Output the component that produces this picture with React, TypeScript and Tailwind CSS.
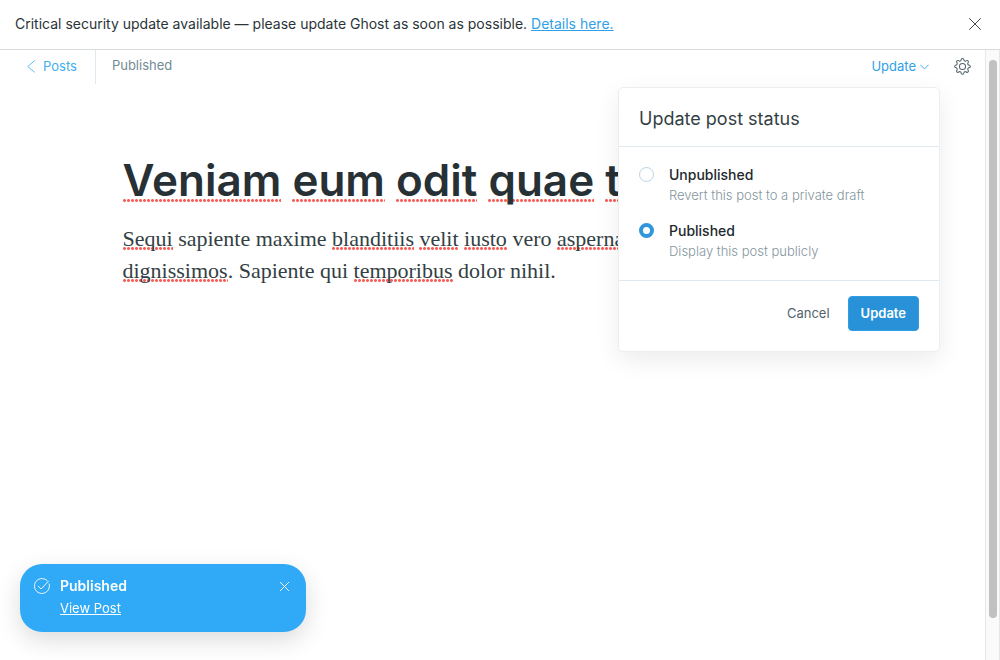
import { useState } from "react";

type Status = "unpublished" | "published";

const options: { value: Status; label: string; hint: string }[] = [
  { value: "unpublished", label: "Unpublished", hint: "Revert this post to a private draft" },
  { value: "published", label: "Published", hint: "Display this post publicly" },
];

function CloseIcon({ className }: { className: string }) {
  return (
    <svg viewBox="0 0 12 12" fill="none" stroke="currentColor" strokeLinecap="round" className={className} aria-hidden="true">
      <path d="M.5.5l11 11M11.5.5L.5 11.5" />
    </svg>
  );
}

function GearIcon() {
  return (
    <svg viewBox="0 0 24 24" fill="none" stroke="currentColor" strokeWidth="1.5" strokeLinejoin="round" className="size-[17px]" aria-hidden="true">
      <circle cx="12" cy="12" r="4.3" />
      <path d="M13.73 2.01c-.53-1.68-2.93-1.68-3.46 0l-.33 1.12a1.86 1.86 0 0 1-2.67 1.1l-1.03-.56c-1.56-.84-3.26.86-2.42 2.42l.56 1.02a1.86 1.86 0 0 1-1.1 2.67l-1.12.33c-1.68.53-1.68 2.93 0 3.46l1.12.33a1.86 1.86 0 0 1 1.1 2.67l-.56 1.03c-.84 1.56.86 3.26 2.42 2.42l1.02-.56a1.86 1.86 0 0 1 2.67 1.1l.33 1.12c.53 1.68 2.93 1.68 3.46 0l.33-1.12a1.86 1.86 0 0 1 2.67-1.1l1.03.56c1.56.84 3.26-.86 2.42-2.42l-.56-1.02a1.86 1.86 0 0 1 1.1-2.67l1.12-.33c1.68-.53 1.68-2.93 0-3.46l-1.12-.33a1.86 1.86 0 0 1-1.1-2.67l.56-1.03c.84-1.56-.86-3.26-2.42-2.42l-1.02.56a1.86 1.86 0 0 1-2.67-1.1z" />
    </svg>
  );
}

function Misspelt({ children, heading = false }: { children: string; heading?: boolean }) {
  return (
    <span
      className={`bg-[radial-gradient(circle_at_1.5px_1.5px,#f75f58_1.1px,transparent_1.8px)] bg-[length:4px_3px] bg-repeat-x ${
        heading ? "[background-position:0_90%]" : "[background-position:0_96%]"
      }`}
    >
      {children}
    </span>
  );
}

function StatusMenu() {
  const [status, setStatus] = useState<Status>("published");
  return (
    <form
      onSubmit={(e) => e.preventDefault()}
      className="absolute top-full right-0 z-10 mt-1 w-[322px] rounded-[5px] border border-[#eceff0] bg-white shadow-[0_8px_24px_rgba(0,0,0,0.08)]"
    >
      <h2 className="border-b border-[#dfe9f0] px-5 pt-[18px] pb-[14px] text-lg leading-[26px] text-[#343f44]">Update post status</h2>
      <fieldset className="flex flex-col gap-4 border-b border-[#dfe9f0] px-5 pt-[18px] pb-[19px]">
        {options.map((o) => (
          <label key={o.value} className="flex gap-[15px]">
            <input
              type="radio"
              name="status"
              value={o.value}
              checked={status === o.value}
              onChange={() => setStatus(o.value)}
              className="mt-[2px] size-[15px] shrink-0 appearance-none rounded-full border border-[#bcd3e3] bg-white checked:border-4 checked:border-[#2f96dc]"
            />
            <span className="flex flex-col">
              <span className="text-sm leading-5 font-medium text-[#22292c]">{o.label}</span>
              <span className="text-[13px] leading-5 font-light text-[#84969e]">{o.hint}</span>
            </span>
          </label>
        ))}
      </fieldset>
      <div className="flex items-center justify-end gap-[18px] px-5 pt-[15px] pb-5">
        <button type="button" className="text-[13px] text-[#53646c]">Cancel</button>
        <button type="submit" className="h-[35px] rounded-[4px] border border-[#2f9de4] bg-[#2891d8] px-3 text-[13px] font-semibold text-white">
          Update
        </button>
      </div>
    </form>
  );
}

export default function App() {
  return (
    <div className="flex min-h-screen flex-col bg-white font-[Inter,sans-serif] text-[#263238]">
      <aside className="flex h-[50px] items-center justify-between border-b border-[#d9dcdd] pr-[19px] pb-[2px] pl-[15px] text-sm text-[#2b3438]">
        <p>
          Critical security update available — please update Ghost as soon as possible.{" "}
          <a href="#details" className="text-[#30a0e8] underline">Details here.</a>
        </p>
        <button type="button" aria-label="Dismiss" className="text-[#3f4a50]">
          <CloseIcon className="size-3" />
        </button>
      </aside>

      <div className="flex flex-1">
        <div className="flex min-w-0 flex-1 flex-col">
          <header className="flex h-[34px] items-stretch justify-between pr-[14px] pl-[26px]">
            <nav className="flex">
              <a href="#posts" className="flex items-center gap-[7px] border-r border-[#dfe9f0] pr-[18px] pb-px text-[13px] text-[#3eb0ef]">
                <svg viewBox="0 0 10 14" fill="none" stroke="currentColor" strokeWidth="0.9" strokeLinecap="round" strokeLinejoin="round" className="h-[13px] w-[10px]" aria-hidden="true">
                  <path d="M8.5 1L1.5 7l7 6" />
                </svg>
                Posts
              </a>
              <span className="flex items-center pb-[2px] pl-4 text-[13px] text-[#738a94]">Published</span>
            </nav>
            <div className="flex pb-px">
              <div className="relative flex pr-[11px]">
                <button type="button" className="flex items-center gap-1 text-[13px] text-[#30a0e8]">
                  Update
                  <svg viewBox="0 0 10 6" fill="none" stroke="currentColor" strokeLinecap="round" className="h-[6px] w-[9px]" aria-hidden="true">
                    <path d="M.7.8L5 5.2 9.3.8" />
                  </svg>
                </button>
                <StatusMenu />
              </div>
              <button type="button" aria-label="Post settings" className="pl-[14px] text-[#54666d]">
                <GearIcon />
              </button>
            </div>
          </header>

          <main className="mx-auto w-full max-w-[740px] pt-[68px]">
            <h1 className="text-[44px] leading-[56px] font-semibold text-[#263035]">
              <Misspelt heading>Veniam</Misspelt> <Misspelt heading>eum</Misspelt> <Misspelt heading>odit</Misspelt>{" "}
              <Misspelt heading>quae</Misspelt> <Misspelt heading>totam</Misspelt>
            </h1>
            <p className="mt-[15px] font-[Georgia,'Liberation_Serif',serif] text-[22px] leading-8 text-[#333f44]">
              <Misspelt>Sequi</Misspelt> sapiente maxime <Misspelt>blanditiis</Misspelt> <Misspelt>velit</Misspelt>{" "}
              <Misspelt>iusto</Misspelt> vero <Misspelt>aspernatur</Misspelt> <Misspelt>voluptatibus</Misspelt>{" "}
              <Misspelt>dignissimos</Misspelt>. Sapiente qui <Misspelt>temporibus</Misspelt> dolor nihil.
            </p>
          </main>
        </div>

        <div className="flex w-[15px] justify-center border-x border-[#e6e6e6] bg-[#fafafa] pt-[10px] pb-[42px]" aria-hidden="true">
          <div className="w-2 rounded-full bg-[#c1c1c1]" />
        </div>
      </div>

      <section className="fixed bottom-7 left-5 flex h-[68px] w-[286px] items-start gap-[10px] rounded-[22px] bg-[#30aaf7] px-[14px] pt-3 text-white shadow-[0_8px_24px_rgba(0,0,0,0.14)]">
        <svg viewBox="0 0 16 16" fill="none" stroke="currentColor" strokeWidth="0.9" strokeLinecap="round" strokeLinejoin="round" className="mt-[2px] size-4" aria-hidden="true">
          <path d="M15.2 6A7.5 7.5 0 1 1 13.200 2.600" />
          <path d="M4.300 8.200l2.800 2.800 7.300-7.700" />
        </svg>
        <div className="flex flex-1 flex-col items-start gap-[2px]">
          <strong className="text-sm leading-5 font-semibold">Published</strong>
          <a href="#view" className="text-[13px] leading-5 underline">View Post</a>
        </div>
        <button type="button" aria-label="Close notification" className="mt-[6px] mr-[3px]">
          <CloseIcon className="size-[9px] stroke-[1.3]" />
        </button>
      </section>
    </div>
  );
}
